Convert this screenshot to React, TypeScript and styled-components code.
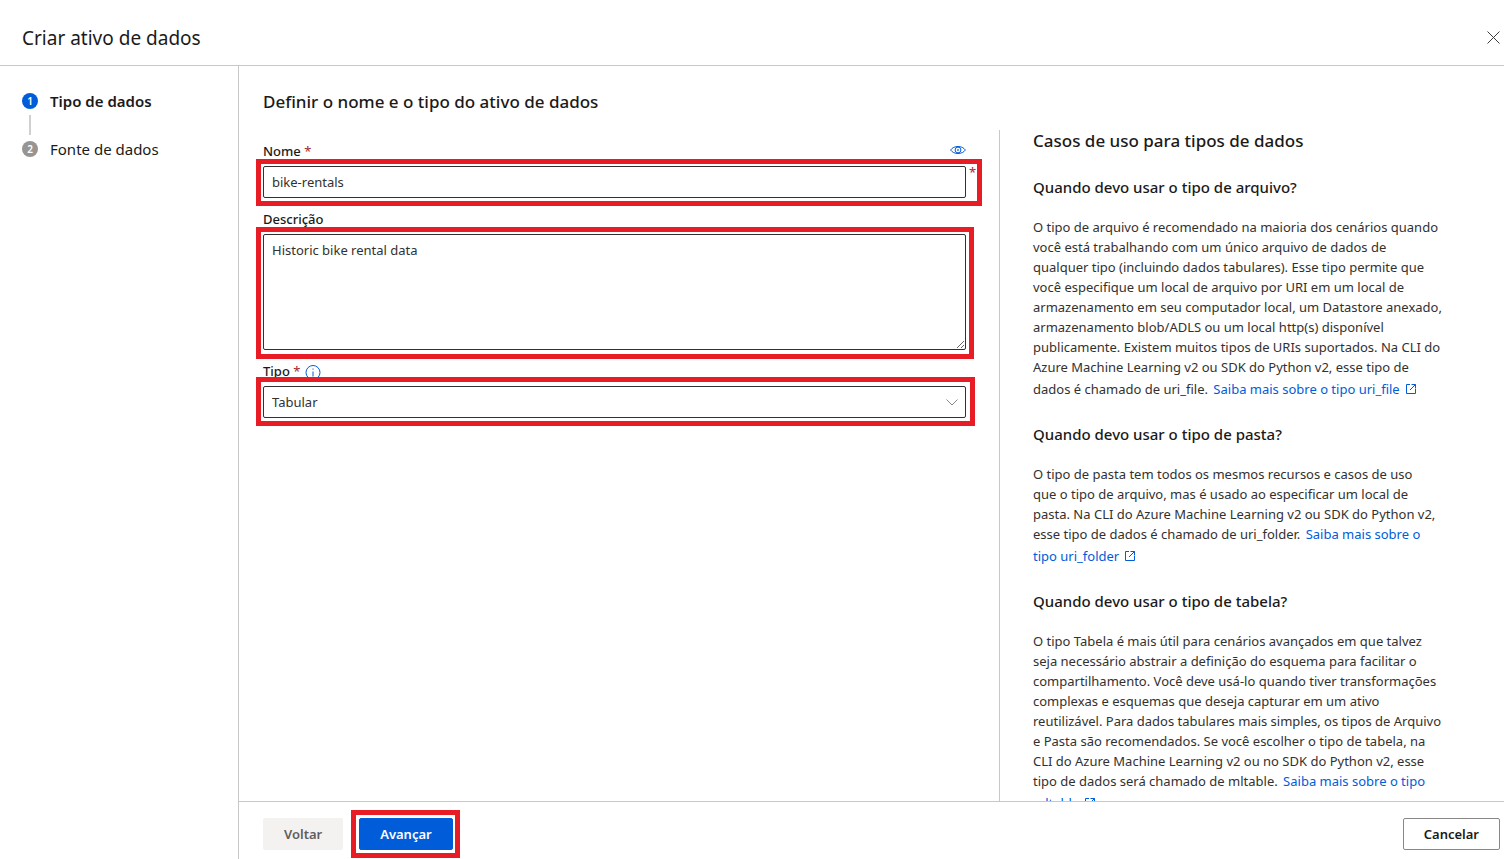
import React from "react";
import styled, { createGlobalStyle } from "styled-components";

const GlobalStyle = createGlobalStyle`
  *, *::before, *::after { box-sizing: border-box; }
  body {
    margin: 0;
    background: #fff;
    color: #1b1a19;
    font-family: "Noto Sans", "Open Sans", sans-serif;
    font-size: 14px;
    line-height: 20px;
  }
  button, input, select, textarea { font: inherit; color: inherit; }
  h1, h2, h3, h4, p, ol { margin: 0; padding: 0; }
`;

const Page = styled.div`
  display: flex;
  flex-direction: column;
  height: 100vh;
`;

const Header = styled.header`
  display: flex;
  align-items: center;
  justify-content: space-between;
  flex: none;
  height: 66px;
  padding: 10px 4px 0 22px;
  border-bottom: 1px solid #c8c8c8;
`;

const Title = styled.h1`
  font-size: 19px;
  line-height: 28px;
  font-weight: 400;
`;

const CloseButton = styled.button`
  display: flex;
  padding: 0;
  border: 0;
  background: none;
  color: #3b3a39;
`;

const Body = styled.div`
  display: flex;
  flex: 1;
  min-height: 0;
`;

const Sidebar = styled.nav`
  flex: none;
  width: 239px;
  padding: 23px 22px;
  border-right: 1px solid #c8c8c8;
`;

const Steps = styled.ol`
  list-style: none;
`;

const Step = styled.li<{ $active?: boolean }>`
  display: flex;
  align-items: center;
  gap: 12px;
  height: 24px;
  font-size: 15px;
  font-weight: ${(p) => (p.$active ? 600 : 400)};
`;

const StepNumber = styled.span<{ $active?: boolean }>`
  width: 16px;
  height: 16px;
  border-radius: 50%;
  background: ${(p) => (p.$active ? "#015cda" : "#979593")};
  color: #fff;
  font-size: 10px;
  line-height: 16px;
  font-weight: 600;
  text-align: center;
`;

const Connector = styled.li`
  width: 2px;
  height: 20px;
  margin: 2px 7px;
  background: #d2d0ce;
`;

const Main = styled.main`
  display: flex;
  flex: 1;
  flex-direction: column;
  min-width: 0;
`;

const Heading = styled.h2`
  flex: none;
  padding: 24px 24px 16px;
  font-size: 17px;
  line-height: 24px;
  font-weight: 500;
`;

const Columns = styled.div`
  display: flex;
  flex: 1;
  min-height: 0;
`;

const Form = styled.form`
  display: flex;
  flex: 1;
  flex-direction: column;
  gap: 11px;
  padding: 11px 33px 0 24px;
`;

const Field = styled.div`
  display: flex;
  flex-direction: column;
`;

const LabelRow = styled.div`
  display: flex;
  align-items: flex-start;
  gap: 5px;
  height: 25px;
`;

const Label = styled.label`
  font-size: 13px;
  font-weight: 500;
`;

const Required = styled.span`
  color: #a4262c;
  font-weight: 400;
`;

const IconButton = styled.button<{ $end?: boolean }>`
  display: flex;
  padding: 0;
  margin-left: ${(p) => (p.$end ? "auto" : "0")};
  border: 0;
  background: none;
  color: #015cda;
`;

const Control = styled.div<{ $starred?: boolean }>`
  position: relative;
  display: flex;

  &::after {
    content: ${(p) => (p.$starred ? '"*"' : "none")};
    position: absolute;
    top: -4px;
    left: calc(100% + 3px);
    color: #a4262c;
    font-size: 13px;
  }
`;

const controlBox = `
  width: 100%;
  padding: 0 8px;
  border: 1px solid #323130;
  border-radius: 2px;
  background: #fff;
  color: #323130;
  font-size: 13px;
  outline: none;
`;

const TextInput = styled.input`
  ${controlBox}
  height: 32px;
`;

const TextArea = styled.textarea`
  ${controlBox}
  height: 116px;
  padding: 5px 8px;
  resize: vertical;
`;

const Select = styled.select`
  ${controlBox}
  height: 32px;
  appearance: none;
`;

const SelectArrow = styled.svg`
  position: absolute;
  top: 10px;
  right: 8px;
  color: #8a8886;
  pointer-events: none;
`;

const Highlight = styled.span<{ $inset: string }>`
  position: absolute;
  inset: ${(p) => p.$inset};
  border: 5px solid #e81c24;
  pointer-events: none;
`;

const Aside = styled.aside`
  flex: none;
  width: 505px;
  padding-left: 33px;
  border-left: 1px solid #c8c8c8;
  overflow: auto;
  scrollbar-width: none;
  white-space: nowrap;
`;

const AsideTitle = styled.h3`
  font-size: 17px;
  line-height: 22px;
  font-weight: 500;
`;

const Topic = styled.section`
  padding-top: 24px;
`;

const TopicTitle = styled.h4`
  padding-bottom: 19px;
  font-size: 15px;
  line-height: 22px;
  font-weight: 500;
`;

const TopicText = styled.p`
  color: #323130;
  font-size: 13px;
`;

const Link = styled.a`
  margin-left: 2px;
  color: #015cda;
  text-decoration: none;
`;

const LinkGlyph = styled.svg`
  margin-left: 5px;
`;

const Footer = styled.footer`
  display: flex;
  flex: none;
  align-items: flex-start;
  gap: 16px;
  height: 58px;
  padding: 16px 4px 0 24px;
  border-top: 1px solid #c8c8c8;
`;

const ButtonSlot = styled.div<{ $end?: boolean }>`
  position: relative;
  margin-left: ${(p) => (p.$end ? "auto" : "0")};
`;

const variants = {
  disabled: "background: #f3f2f1; color: #605e5c; border-color: #f3f2f1;",
  primary: "background: #015cda; color: #fff; border-color: #015cda;",
  normal: "background: #fff; color: #1b1a19; border-color: #8a8886;",
};

const Button = styled.button<{ $variant: keyof typeof variants }>`
  display: block;
  height: 32px;
  min-width: 80px;
  padding: 0 20px;
  border: 1px solid;
  border-radius: 2px;
  font-size: 13px;
  font-weight: 600;
  ${(p) => variants[p.$variant]}
`;

const OpenIcon = () => (
  <LinkGlyph width="12" height="17" viewBox="0 0 12 17" fill="none" stroke="currentColor" aria-hidden="true">
    <path d="M5 7.500H1.500v9h9V12M6.500 7.500h4v4M10.500 7.500l-5.500 5.500" />
  </LinkGlyph>
);

const Lines = ({ lines }: { lines: string[] }) => (
  <>
    {lines.map((line, i) => (
      <React.Fragment key={line}>
        {i > 0 && <br />}
        {line}
      </React.Fragment>
    ))}
  </>
);

const topics = [
  {
    title: "Quando devo usar o tipo de arquivo?",
    text: [
      "O tipo de arquivo é recomendado na maioria dos cenários quando",
      "você está trabalhando com um único arquivo de dados de",
      "qualquer tipo (incluindo dados tabulares). Esse tipo permite que",
      "você especifique um local de arquivo por URI em um local de",
      "armazenamento em seu computador local, um Datastore anexado,",
      "armazenamento blob/ADLS ou um local http(s) disponível",
      "publicamente. Existem muitos tipos de URIs suportados. Na CLI do",
      "Azure Machine Learning v2 ou SDK do Python v2, esse tipo de",
      "dados é chamado de uri_file.",
    ],
    link: ["Saiba mais sobre o tipo uri_file"],
  },
  {
    title: "Quando devo usar o tipo de pasta?",
    text: [
      "O tipo de pasta tem todos os mesmos recursos e casos de uso",
      "que o tipo de arquivo, mas é usado ao especificar um local de",
      "pasta. Na CLI do Azure Machine Learning v2 ou SDK do Python v2,",
      "esse tipo de dados é chamado de uri_folder.",
    ],
    link: ["Saiba mais sobre o", "tipo uri_folder"],
  },
  {
    title: "Quando devo usar o tipo de tabela?",
    text: [
      "O tipo Tabela é mais útil para cenários avançados em que talvez",
      "seja necessário abstrair a definição do esquema para facilitar o",
      "compartilhamento. Você deve usá-lo quando tiver transformações",
      "complexas e esquemas que deseja capturar em um ativo",
      "reutilizável. Para dados tabulares mais simples, os tipos de Arquivo",
      "e Pasta são recomendados. Se você escolher o tipo de tabela, na",
      "CLI do Azure Machine Learning v2 ou no SDK do Python v2, esse",
      "tipo de dados será chamado de mltable.",
    ],
    link: ["Saiba mais sobre o tipo", "mltable"],
  },
];

export default function App() {
  return (
    <Page>
      <GlobalStyle />
      <Header>
        <Title>Criar ativo de dados</Title>
        <CloseButton type="button" aria-label="Fechar">
          <svg width="13" height="13" viewBox="0 0 13 13" stroke="currentColor" aria-hidden="true">
            <path d="M.5.5l12 12M12.5.5l-12 12" />
          </svg>
        </CloseButton>
      </Header>
      <Body>
        <Sidebar>
          <Steps>
            <Step $active>
              <StepNumber $active>1</StepNumber>
              Tipo de dados
            </Step>
            <Connector aria-hidden="true" />
            <Step>
              <StepNumber>2</StepNumber>
              Fonte de dados
            </Step>
          </Steps>
        </Sidebar>
        <Main>
          <Heading>Definir o nome e o tipo do ativo de dados</Heading>
          <Columns>
            <Form id="asset">
              <Field>
                <LabelRow>
                  <Label htmlFor="name">
                    Nome <Required>*</Required>
                  </Label>
                  <IconButton type="button" $end aria-label="Visualizar">
                    <svg width="16" height="18" viewBox="0 0 16 18" fill="none" stroke="currentColor" aria-hidden="true">
                      <path d="M.6 9C2.300 6.600 5 5.500 8 5.500S13.700 6.600 15.400 9C13.700 11.400 11 12.500 8 12.500S2.300 11.400.6 9z" />
                      <circle cx="8" cy="9" r="2.900" />
                      <circle cx="8" cy="9" r=".5" />
                    </svg>
                  </IconButton>
                </LabelRow>
                <Control $starred>
                  <TextInput id="name" defaultValue="bike-rentals" />
                  <Highlight $inset="-7px -16px -8px -7px" />
                </Control>
              </Field>
              <Field>
                <LabelRow>
                  <Label htmlFor="description">Descrição</Label>
                </LabelRow>
                <Control>
                  <TextArea id="description" defaultValue="Historic bike rental data" />
                  <Highlight $inset="-7px -8px -9px -7px" />
                </Control>
              </Field>
              <Field>
                <LabelRow>
                  <Label htmlFor="type">
                    Tipo <Required>*</Required>
                  </Label>
                  <IconButton type="button" aria-label="Informações">
                    <svg width="16" height="20" viewBox="0 0 16 20" fill="none" stroke="currentColor" aria-hidden="true">
                      <circle cx="8" cy="11.500" r="7" />
                      <path d="M8 10.500v5M8 7.500v1.200" />
                    </svg>
                  </IconButton>
                </LabelRow>
                <Control>
                  <Select id="type" defaultValue="Tabular">
                    <option>Tabular</option>
                  </Select>
                  <SelectArrow width="12" height="12" viewBox="0 0 12 12" fill="none" stroke="currentColor" aria-hidden="true">
                    <path d="M.5 3.500L6 9l5.500-5.500" />
                  </SelectArrow>
                  <Highlight $inset="-9px -9px -8px -7px" />
                </Control>
              </Field>
            </Form>
            <Aside>
              <AsideTitle>Casos de uso para tipos de dados</AsideTitle>
              {topics.map((topic) => (
                <Topic key={topic.title}>
                  <TopicTitle>{topic.title}</TopicTitle>
                  <TopicText>
                    <Lines lines={topic.text} />{" "}
                    <Link href="#">
                      <Lines lines={topic.link} />
                      <OpenIcon />
                    </Link>
                  </TopicText>
                </Topic>
              ))}
            </Aside>
          </Columns>
          <Footer>
            <ButtonSlot>
              <Button type="button" $variant="disabled" disabled>
                Voltar
              </Button>
            </ButtonSlot>
            <ButtonSlot>
              <Button type="submit" form="asset" $variant="primary">
                Avançar
              </Button>
              <Highlight $inset="-8px -7px -8px -8px" />
            </ButtonSlot>
            <ButtonSlot $end>
              <Button type="button" $variant="normal">
                Cancelar
              </Button>
            </ButtonSlot>
          </Footer>
        </Main>
      </Body>
    </Page>
  );
}
